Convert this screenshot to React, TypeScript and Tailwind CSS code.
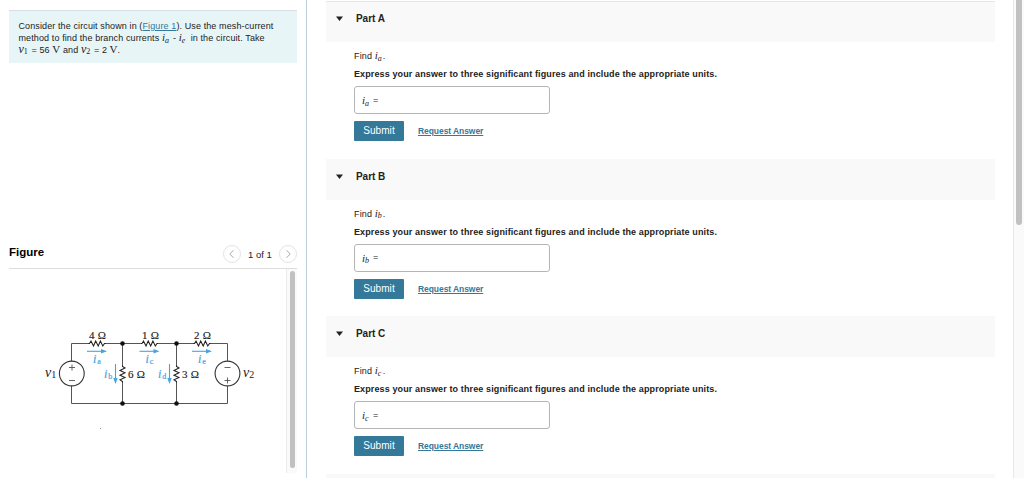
import React from "react";

function MathVar({ name, sub, wide = false }: { name: string; sub: string; wide?: boolean }) {
  return (
    <span className={`inline-block h-[10px] align-baseline leading-[10px] ${wide ? "w-[13px]" : "w-[11px]"} font-['Liberation_Serif',serif] font-normal tracking-normal whitespace-nowrap`}>
      <i className={wide ? "text-[12px]" : "text-[11px]"}>{name}</i>
      <span className={`relative top-[1.5px] text-[8px] ${wide ? "" : "italic"}`}>{sub}</span>
    </span>
  );
}

function Volt() {
  return <span className="inline-block w-[8px] font-['Liberation_Serif',serif] text-[11px] leading-none tracking-normal">V</span>;
}

function Part({ letter, sub, first = false }: { letter: string; sub: string; first?: boolean }) {
  return (
    <section className="h-[157.5px] shrink-0">
      <header className={`flex h-[41px] w-[669px] items-start border-t bg-[#f9f9f9] pt-[10px] pl-[10px] ${first ? "border-[#e6e6e6]" : "border-[#f9f9f9]"}`}>
        <svg className="mt-[4px] h-[6px] w-[8px]" viewBox="0 0 8 6">
          <path d="M0 0.5H7L3.5 5Z" fill="#222" />
        </svg>
        <h2 className="ml-[12px] text-[10px] leading-[14px] font-bold tracking-[-0.05px] text-[#222]">Part {letter}</h2>
      </header>
      <div className="flex flex-col pl-[28px]">
        <p className="mt-[7px] h-[14px] text-[9px] leading-[14px] whitespace-nowrap">
          <span className="tracking-[0.15px]">Find </span>
          <MathVar name="i" sub={sub} />
          <span className="-ml-[3px]">.</span>
        </p>
        <p className="mt-[4px] h-[14px] text-[9px] leading-[14px] font-bold tracking-[0.12px] whitespace-nowrap">
          Express your answer to three significant figures and include the appropriate units.
        </p>
        <div className="mt-[5px] flex h-[28px] w-[196px] items-center rounded-[3px] border border-[#b5b5b5] bg-white pl-[7px] text-[9px]">
          <MathVar name="i" sub={sub} />
          <span className="pt-px">=</span>
        </div>
        <div className="mt-[7px] flex h-[20px] items-center">
          <button className="h-[20px] w-[50px] rounded-[1px] bg-[#34789a] text-[10px] leading-[20px] tracking-[0.05px] text-white">Submit</button>
          <a className="ml-[14px] text-[8.5px] leading-[12px] font-bold tracking-[-0.07px] whitespace-nowrap text-[#34789a] underline">Request Answer</a>
        </div>
      </div>
    </section>
  );
}

function Resistor({ x, y, vertical = false }: { x: number; y: number; vertical?: boolean }) {
  return (
    <path
      d="M-8.5 0H-7.5L-6 -2.5L-3.5 2.5L-1.3 -2.5L1.2 2.5L3.4 -2.5L5.800 2.5L7.500 0H8.5"
      transform={`translate(${x} ${y})${vertical ? " rotate(90)" : ""}`}
      fill="none"
      stroke="#222"
      strokeWidth="1.05"
    />
  );
}

function Arrow({ x, y, down = false }: { x: number; y: number; down?: boolean }) {
  return (
    <g transform={`translate(${x} ${y})${down ? " rotate(90)" : ""}`}>
      <path d="M0 0H15" stroke="#47a3e2" strokeWidth="1.1" />
      <path d="M14 -2.2L20 0L14 2.2Z" fill="#47a3e2" />
    </g>
  );
}

function Current({ x, y, sub }: { x: number; y: number; sub: string }) {
  return (
    <text x={x} y={y} fill="#47a3e2" stroke="#47a3e2" strokeWidth="0.2" fontSize="12" fontStyle="italic">
      i
      <tspan fontSize="8" fontStyle="normal" dx="0.9" dy="1">{sub}</tspan>
    </text>
  );
}

function Circuit() {
  return (
    <svg className="h-[120px] w-[230px] font-['Liberation_Serif',serif]" viewBox="40 320 230 120" fill="#222">
      <g fill="none" stroke="#555" strokeWidth="1">
        <path d="M71.5 361V343.5H89M105 343.5H141.5M157.5 343.5H194M210 343.5H227.5V361" />
        <path d="M71.5 386V403.5H227.5V386" />
        <path d="M122.5 343.5V366M122.5 382V403.5M176.5 343.5V366M176.5 382V403.5" />
      </g>
      <Resistor x={97} y={343.5} />
      <Resistor x={149.5} y={343.5} />
      <Resistor x={202} y={343.5} />
      <Resistor x={122.5} y={374} vertical />
      <Resistor x={176.5} y={374} vertical />
      {[[122.5, 343.5], [176.5, 343.5], [122.5, 403.5], [176.5, 403.5]].map(([x, y]) => (
        <circle key={`${x}-${y}`} cx={x} cy={y} r="2.3" fill="#111" />
      ))}
      <g fill="none" stroke="#333" strokeWidth="1.1">
        <circle cx="71.8" cy="373.5" r="12.4" />
        <circle cx="227.5" cy="373.5" r="12.4" />
      </g>
      <path d="M69 367.5H75M72 364.5V370.5M69 380.5H75M224.5 367.5H230.5M224.5 380.5H230.5M227.5 377.5V383.5" stroke="#555" strokeWidth="0.9" />
      <g fontSize="11" letterSpacing="0.3" stroke="#222" strokeWidth="0.15">
        <text x="89" y="338.5">4 Ω</text>
        <text x="142" y="338.5">1 Ω</text>
        <text x="194" y="338.5">2 Ω</text>
        <text x="128" y="378">6 Ω</text>
        <text x="182" y="378">3 Ω</text>
      </g>
      <text x="45" y="376.5" fontSize="14" fontStyle="italic">v<tspan fontSize="10" fontStyle="normal" dy="1">1</tspan></text>
      <text x="243" y="376.5" fontSize="14" fontStyle="italic">v<tspan fontSize="10" fontStyle="normal" dy="1">2</tspan></text>
      <Arrow x={87} y={351.3} />
      <Arrow x={139.5} y={351.3} />
      <Arrow x={192} y={351.3} />
      <Arrow x={115.5} y={364} down />
      <Arrow x={169.5} y={364} down />
      <Current x={93} y={362.5} sub="a" />
      <Current x={145.5} y={362.5} sub="c" />
      <Current x={198} y={362.5} sub="e" />
      <Current x={104} y={377.5} sub="b" />
      <Current x={158} y={377.5} sub="d" />
      <circle cx="100.5" cy="428.5" r="0.6" fill="#888" />
    </svg>
  );
}

function PagerButton({ direction }: { direction: "previous" | "next" }) {
  return (
    <button aria-label={direction} className="flex size-[18px] items-center justify-center rounded-full border border-[#e3e3e3]">
      <svg className="size-[10px]" viewBox="0 0 10 10" fill="none" stroke="#aaa" strokeWidth="1">
        <path d={direction === "previous" ? "M6.5 1.2L2.8 5L6.5 8.8" : "M3.5 1.2L7.2 5L3.5 8.8"} />
      </svg>
    </button>
  );
}

export default function App() {
  return (
    <main className="flex h-[478px] w-[1024px] overflow-hidden bg-white font-['Liberation_Sans',Arial,sans-serif] text-[#222]">
      <aside className="flex w-[307px] shrink-0 flex-col border-r border-[#bccddd] pt-[10px] pl-[9px]">
        <div className="h-[53px] w-[288px] border-t border-[#d8dfe0] bg-[#e8f5f7] pt-[10px] pl-[9.5px] text-[9px] tracking-[0.11px] whitespace-nowrap">
          <p className="h-[11px] leading-[11px]">
            Consider the circuit shown in (<a className="text-[#34789a] underline">Figure 1</a>). Use the mesh-current
          </p>
          <p className="h-[11.5px] leading-[11.5px]">
            method to find the branch currents <MathVar name="i" sub="a" />- <MathVar name="i" sub="e" />
            <span className="ml-px">in the circuit. Take</span>
          </p>
          <p className="h-[11.5px] leading-[11.5px]">
            <MathVar name="v" sub="1" wide />= 56 <Volt /> and <MathVar name="v" sub="2" wide />= 2 <Volt />.
          </p>
        </div>
        <div className="mt-[177px] flex h-[29px] w-[288px] items-center border-b border-[#ddd]">
          <h1 className="mb-[4px] text-[11.5px] leading-[14px] font-bold text-black">Figure</h1>
          <div className="ml-auto flex items-center">
            <PagerButton direction="previous" />
            <span className="mt-[2px] w-[38px] text-center text-[9.5px] leading-[14px] whitespace-nowrap">1 of 1</span>
            <PagerButton direction="next" />
          </div>
        </div>
        <div className="flex h-[204px] w-[288px]">
          <div className="flex-1 pt-[51px] pl-[31px]"><Circuit /></div>
          <div className="flex w-[11px] shrink-0 justify-center border-l border-[#ececec] bg-[#fafafa] pt-[2px]">
            <div className="h-[197px] w-[5px] rounded-full bg-[#c1c1c1]" />
          </div>
        </div>
      </aside>
      <div className="flex flex-1 flex-col overflow-hidden pt-px pl-[19px]">
        <Part letter="A" sub="a" first />
        <Part letter="B" sub="b" />
        <Part letter="C" sub="c" />
        <div className="h-[41px] w-[669px] shrink-0 bg-[#f9f9f9]" />
      </div>
      <div className="flex w-[11px] shrink-0 justify-center border-l border-[#e8e8e8] bg-[#fafafa]">
        <div className="h-[225px] w-[6px] rounded-b-full bg-[#c1c1c1]" />
      </div>
    </main>
  );
}
